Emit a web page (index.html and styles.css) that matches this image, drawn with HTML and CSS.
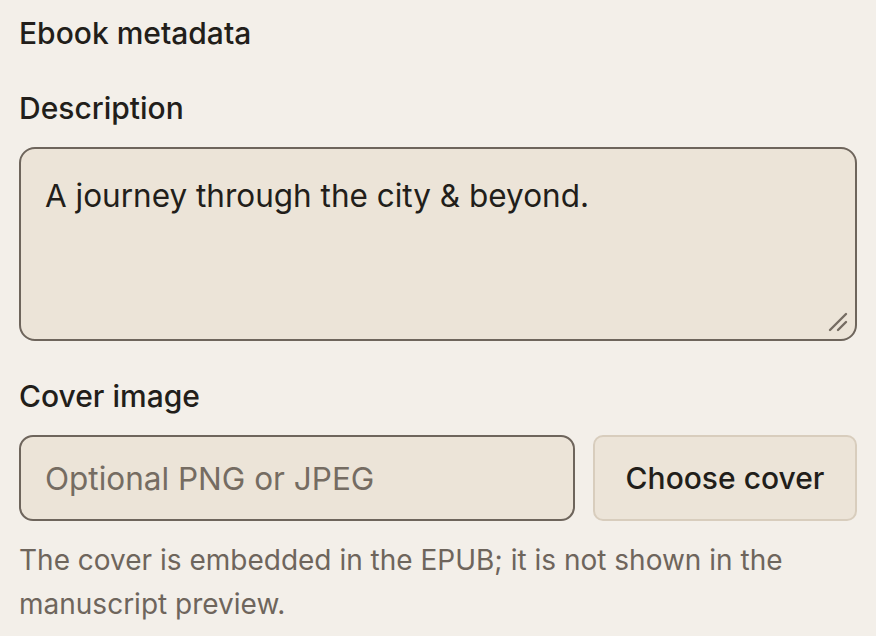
FILE: index.html
```html
<!DOCTYPE html>
<html lang="en">
<head>
<meta charset="utf-8">
<title>Ebook metadata</title>
<link rel="stylesheet" href="styles.css">
</head>
<body>
<section class="panel">
  <h2 class="title">Ebook metadata</h2>
  <label class="label" for="desc">Description</label>
  <div class="area-wrap">
    <textarea id="desc" class="area">A journey through the city &amp; beyond.</textarea>
    <svg class="grip" width="22" height="22" viewBox="0 0 22 22" aria-hidden="true">
      <path d="M3 19 L19 3 M11 19 L19 11" stroke="#756c62" stroke-width="2.4" stroke-linecap="round" fill="none"/>
    </svg>
  </div>
  <label class="label label-cover" for="cover">Cover image</label>
  <div class="cover-row">
    <input id="cover" class="field" type="text" placeholder="Optional PNG or JPEG">
    <button class="btn" type="button">Choose cover</button>
  </div>
  <p class="help">The cover is embedded in the EPUB; it is not shown in the manuscript preview.</p>
</section>
</body>
</html>
```
FILE: styles.css
```css
html, body {
  margin: 0;
  padding: 0;
  background: #f3efe9;
}
body {
  font-family: Inter, "Noto Sans", "Liberation Sans", sans-serif;
  color: #221e1a;
}
.panel {
  padding: 15px 19px 0 19px;
  display: flex;
  flex-direction: column;
}
.title {
  margin: 0;
  font-size: 30px;
  line-height: 36px;
  font-weight: 500;
}
.label {
  display: block;
  margin-top: 39px;
  font-size: 30px;
  line-height: 36px;
  font-weight: 500;
}
.label-cover {
  margin-top: 37px;
}
.area-wrap {
  position: relative;
  margin-top: 21px;
}
.area {
  display: block;
  box-sizing: border-box;
  width: 100%;
  height: 194px;
  margin: 0;
  padding: 28px 24px;
  border: 2px solid #6e655c;
  border-radius: 16px;
  background: #ece4d8;
  font-family: inherit;
  font-size: 31.5px;
  line-height: 38px;
  color: #221e1a;
  resize: none;
  outline: none;
}
.grip {
  position: absolute;
  right: 8px;
  bottom: 8px;
}
.cover-row {
  display: flex;
  gap: 18px;
  margin-top: 21px;
}
.field {
  flex: 1;
  min-width: 0;
  box-sizing: border-box;
  height: 86px;
  margin: 0;
  padding: 0 24px;
  border: 2px solid #6e655c;
  border-radius: 14px;
  background: #ece4d8;
  font-family: inherit;
  font-size: 31.5px;
  color: #221e1a;
  outline: none;
}
.field::placeholder {
  color: #756c62;
  opacity: 1;
}
.btn {
  box-sizing: border-box;
  width: 264px;
  height: 86px;
  margin: 0;
  padding: 0;
  border: 2px solid #d8cdbd;
  border-radius: 10px;
  background: #ece4d8;
  font-family: inherit;
  font-size: 30px;
  font-weight: 500;
  color: #221e1a;
}
.help {
  margin: 17px 0 0 0;
  font-size: 28px;
  line-height: 44px;
  color: #6e655c;
}
```
